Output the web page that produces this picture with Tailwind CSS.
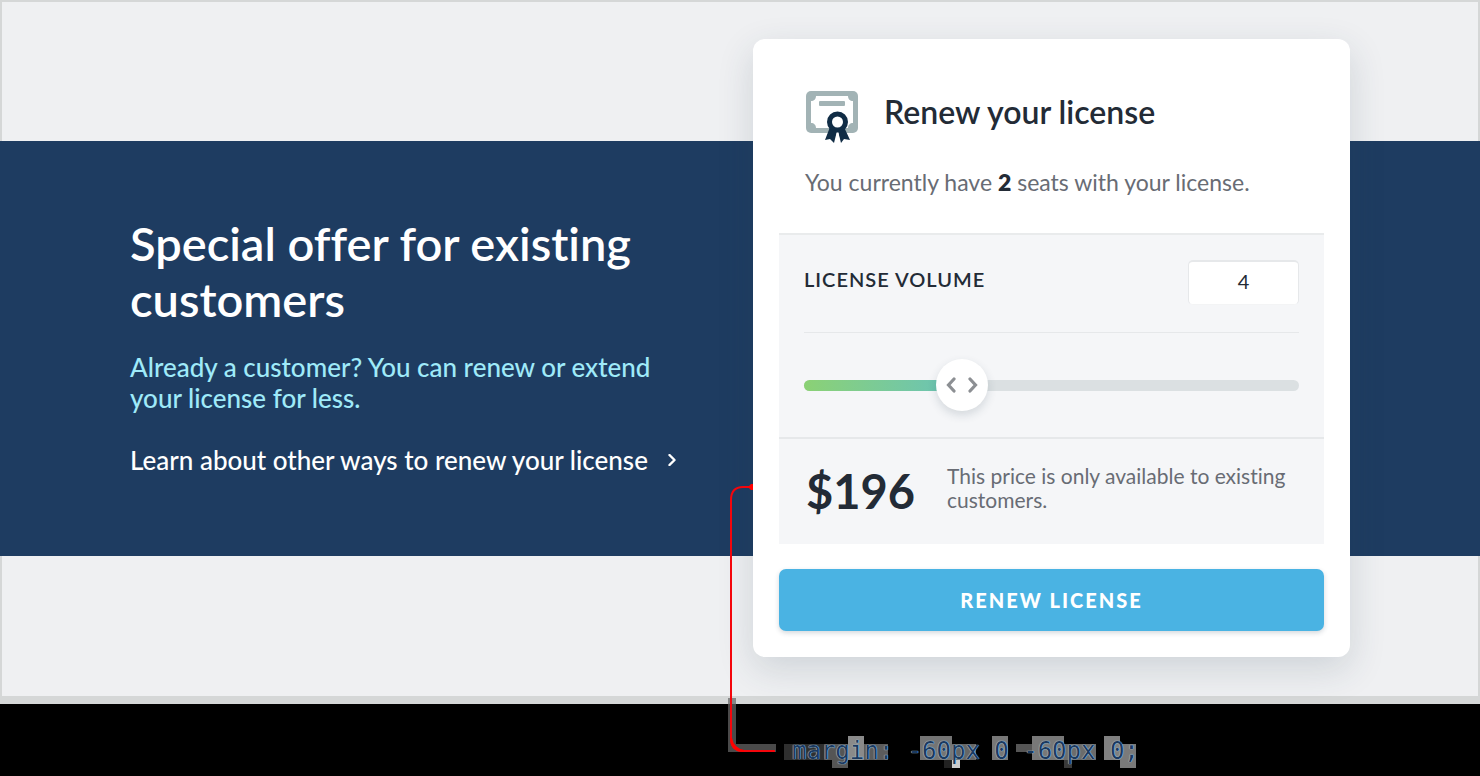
<!DOCTYPE html>
<html lang="en">
<head>
<meta charset="utf-8">
<meta name="viewport" content="width=device-width, initial-scale=1">
<title>Renew your license</title>
<script src="https://cdn.jsdelivr.net/npm/@tailwindcss/browser@4"></script>
</head>
<body class="min-h-screen overflow-x-hidden bg-black font-['Lato','Open_Sans',sans-serif] text-[#232b36] [font-variant-ligatures:none]">
<div class="border-2 border-b-8 border-[#d5d7d7] bg-[#eff0f2] pt-[139px] pb-[140px]">
  <section class="-mx-[2px] flex justify-between gap-10 bg-[#1e3c61] px-[130px]">
    <div class="flex-1 pt-[74px]">
      <h1 class="max-w-[540px] text-[47px] leading-[56px] font-semibold text-white">Special offer for existing customers</h1>
      <p class="mt-[25px] max-w-[550px] text-[26px] leading-[31px] font-medium text-[#9feaf9]">Already a customer? You can renew or extend your license for less.</p>
      <a href="#renew" class="mt-[31px] flex items-center gap-5 text-[26px] leading-[30px] font-medium whitespace-nowrap text-white">Learn about other ways to renew your license
        <svg class="h-3 w-2" viewBox="0 0 8 12" fill="none" stroke="currentColor" stroke-width="2.4" stroke-linecap="round" stroke-linejoin="round" aria-hidden="true"><path d="M1.5 1 6.5 6l-5 5"/></svg>
      </a>
    </div>

    <div class="relative -mt-[102px] -mb-[101px] w-[597px] shrink-0">
      <form id="renew" class="rounded-xl bg-white px-[26px] pt-[51px] pb-[26px] shadow-[0_12px_36px_rgba(40,60,80,0.16)]">
        <div class="flex items-start gap-[25px] px-[27px]">
          <svg class="h-[54px] w-[53px]" viewBox="0 0 53 54" aria-hidden="true">
            <rect x="0" y="1" width="52" height="42" rx="5" fill="#a2b3b5"/>
            <path d="M10 6h32c0 3 2 5 5 5v22c-3 0-5 2-5 5H10c0-3-2-5-5-5V11c3 0 5-2 5-5z" fill="#fff"/>
            <rect x="13" y="11" width="26" height="5" rx="1" fill="#a2b3b5"/>
            <path d="M24 37 19 50l5-1 4 4 3-12h1l3 12 3-4 6 1-6-13z" fill="#102c45"/>
            <path d="M31 41h1l2 11h-4z" fill="#fff"/>
            <circle cx="31.500" cy="32" r="8" fill="#fff" stroke="#102c45" stroke-width="5"/>
          </svg>
          <h2 class="pt-[2px] text-[32px] leading-[40px] font-semibold">Renew your license</h2>
        </div>
        <p class="mt-[23px] px-[26px] text-[23px] leading-[30px] text-[#686c74]">You currently have <strong class="font-extrabold text-[#232b36]">2</strong> seats with your license.</p>

        <div class="mt-9 border-t-2 border-[#e9ebec] bg-[#f5f6f8] px-[25px]">
          <div class="flex items-start justify-between border-b border-[#e6e8ea] pt-[25px] pb-[27px]">
            <label for="volume" class="pt-1 text-[20px] leading-[30px] font-semibold tracking-wider">LICENSE VOLUME</label>
            <input id="volume" type="text" value="4" class="h-[45px] w-[111px] rounded-[5px] border border-t-2 border-[#e6e8ea] border-b-[#f3f4f5] bg-white pb-1 text-center text-[20px]">
          </div>
          <div class="relative flex h-[104px] items-center">
            <div class="h-[11px] w-full rounded-full bg-[#dbe0e2]">
              <div class="h-full rounded-full bg-linear-to-r from-[#8bd174] to-[#68c2b8]" style="width:32%"></div>
            </div>
            <div class="absolute flex size-[52px] -translate-x-1/2 items-center justify-center gap-3 rounded-full bg-white text-[#8c8f93] shadow-[0_4px_10px_rgba(40,60,80,0.16)]" style="left:32%">
              <svg class="h-4 w-[10px]" viewBox="0 0 10 16" fill="none" stroke="currentColor" stroke-width="3.200" stroke-linecap="round" aria-hidden="true"><path d="M8 2 2.500 8 8 14"/></svg>
              <svg class="h-4 w-[10px]" viewBox="0 0 10 16" fill="none" stroke="currentColor" stroke-width="3.200" stroke-linecap="round" aria-hidden="true"><path d="M2 2l5.500 6L2 14"/></svg>
            </div>
            <input type="range" min="1" max="10" value="4" aria-label="License volume" class="absolute inset-x-0 h-[52px] w-full cursor-pointer opacity-0">
          </div>
        </div>
        <div class="flex items-start gap-8 border-t-2 border-[#e6e8ea] bg-[#f5f6f8] px-[27px] pt-6 pb-[25px]">
          <strong class="text-[47px] leading-[56px] font-bold">$196</strong>
          <p class="-mr-[10px] pt-px text-[21px] leading-[24px] text-[#686c74]">This price is only available to existing customers.</p>
        </div>
        <button type="submit" class="mt-[25px] h-[62px] w-full rounded-[7px] bg-[#4ab3e3] text-[20px] font-black tracking-widest text-white shadow-[0_2px_5px_rgba(40,60,80,0.2)]">RENEW LICENSE</button>
      </form>

      <!-- Callout line from the card edge to the margin note -->
      <svg class="pointer-events-none absolute top-[440px] left-[-33px] h-[297px] w-[430px]" viewBox="720 479 430 297" aria-hidden="true">
        <g shape-rendering="crispEdges">
          <path d="M728 698h8v46h40v8h-48z" fill="#4a4a4a"/>
          <path d="M728 698h8v6h-8z" fill="#858787"/>
          <path d="M784 744h40v16h-40z" fill="#2f2f2f"/>
          <path d="M824 744h24v24h-16v-8h-8z" fill="#555"/>
          <path d="M848 736h16v24h-16z" fill="#8a8a8a"/>
          <path d="M864 744h24v16h-24z" fill="#5c5c5c"/>
          <path d="M920 736h32v24h-32z" fill="#747474"/>
          <path d="M952 744h24v16h-24z" fill="#666"/>
          <path d="M944 760h8v8h-8z" fill="#222"/>
          <path d="M952 760h8v8h-8z" fill="#ccc"/>
          <path d="M992 736h16v24h-16z" fill="#777"/>
          <path d="M1016 744h16v8h-16z" fill="#555"/>
          <path d="M1032 736h32v24h-32z" fill="#787878"/>
          <path d="M1064 744h32v16h-32z" fill="#6c6c6c"/>
          <path d="M1064 760h8v8h-8z" fill="#3a3a3a"/>
          <path d="M1104 736h16v24h-16z" fill="#808080"/>
          <path d="M1120 744h16v24h-16z" fill="#7a7a7a"/>
        </g>
        <path d="M751 487h-8q-12 0-12 13v238q0 13 13 13h31" fill="none" stroke="#f4060c" stroke-width="2"/>
        <path d="M748 487l3-3h2v6h-2zM730 738h2q2 10 12 12v2q-14 0-14-14z" fill="#f00"/>
      </svg>
    </div>
  </section>
</div>
<footer class="relative flex justify-end px-[130px] pt-8">
  <code class="w-[558px] font-['DejaVu_Sans_Mono',monospace] text-[24px] leading-[30px] text-[#1b3a60] [text-shadow:0_0_1px_#c4eaff,0_0_1px_#8cc8f0]">margin: -60px 0 -60px 0;</code>
</footer>
</body>
</html>
